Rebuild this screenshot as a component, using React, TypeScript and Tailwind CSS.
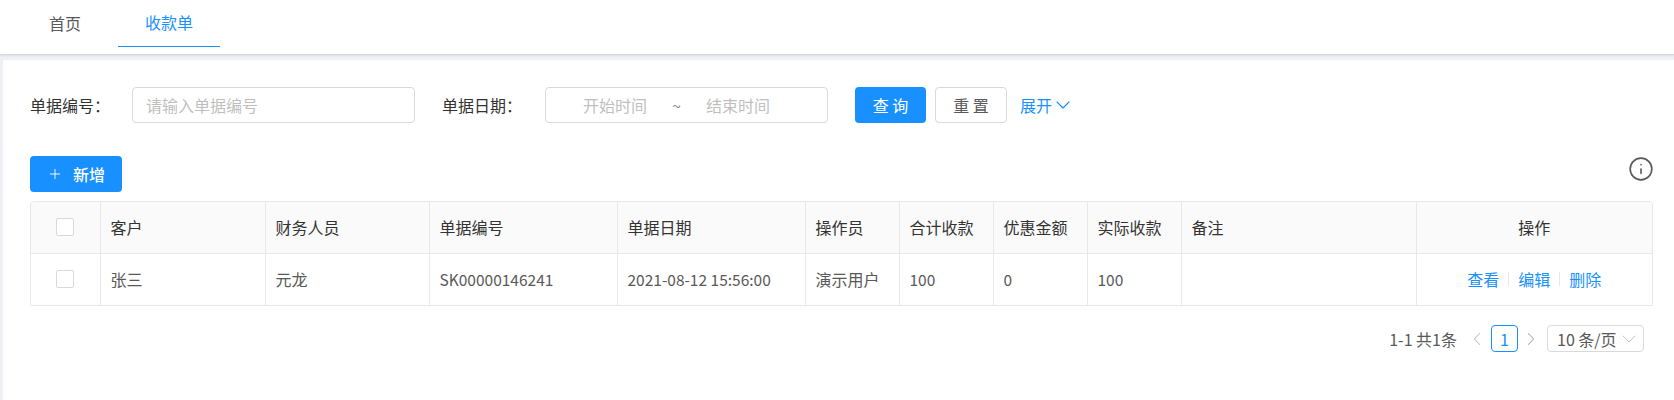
import { ChevronDown, ChevronLeft, ChevronRight, Info, Plus } from "lucide-react";

const font = "font-['Noto_Sans_CJK_SC','Noto_Sans',sans-serif]";

const columns = [
  { title: "客户", value: "张三", width: "w-[165px]", latin: false },
  { title: "财务人员", value: "元龙", width: "w-[164px]", latin: false },
  { title: "单据编号", value: "SK00000146241", width: "w-[188px]", latin: true },
  { title: "单据日期", value: "2021-08-12 15:56:00", width: "w-[188px]", latin: true },
  { title: "操作员", value: "演示用户", width: "w-[94px]", latin: false },
  { title: "合计收款", value: "100", width: "w-[94px]", latin: true },
  { title: "优惠金额", value: "0", width: "w-[94px]", latin: true },
  { title: "实际收款", value: "100", width: "w-[94px]", latin: true },
  { title: "备注", value: "", width: "w-[235px]", latin: false },
];

function Checkbox() {
  return <div className="mx-auto h-[18px] w-[18px] rounded-[2px] border border-[#d9d9d9] bg-white" />;
}

export default function App() {
  return (
    <div className={`${font} min-h-[400px] bg-[#eef0f5] text-[16px] text-[#595959]`}>
      {/* tabs */}
      <div className="flex h-[55px] border-b border-[#d9d9d9] bg-white pl-[30px] shadow-[0_1px_2px_rgba(0,0,0,0.08)]">
        <div className="flex h-[47px] w-[88px] items-center pb-[2px] pl-[19px] text-[#595959]">首页</div>
        <div className="flex h-[47px] w-[102px] items-center justify-center border-b border-[#1890ff] pb-[2px] text-[#1890ff]">收款单</div>
      </div>

      <div className="ml-[3px] mt-[5px] h-[340px] rounded-tl-[2px] bg-white pl-[27px] pr-[21px]">
        {/* search form */}
        <div className="flex h-[36px] translate-y-[27px] items-center">
          <span className="w-[102px] text-[#333]">单据编号：</span>
          <div className="flex h-[36px] w-[283px] items-center rounded-[4px] border border-[#d9d9d9] px-[13px] text-[#bfbfbf]">请输入单据编号</div>
          <span className="ml-[27px] w-[103px] text-[#333]">单据日期：</span>
          <div className="flex h-[36px] w-[283px] items-center rounded-[4px] border border-[#d9d9d9] pl-[37px] text-[#bfbfbf]">
            <span className="w-[64px]">开始时间</span>
            <span className="ml-[25px] w-[9px] text-[#8c8c8c]">~</span>
            <span className="ml-[25px] w-[64px]">结束时间</span>
          </div>
          <button className="ml-[27px] h-[36px] w-[71px] rounded-[4px] bg-[#1890ff] text-white">查 询</button>
          <button className="ml-[9px] h-[36px] w-[72px] rounded-[4px] border border-[#d9d9d9] bg-white">重 置</button>
          <span className="ml-[13px] flex items-center text-[#1890ff]">
            展开
            <ChevronDown size={24} strokeWidth={1.1} className="ml-[-1px]" />
          </span>
        </div>

        {/* toolbar */}
        <div className="mt-[60px] flex h-[36px] items-start justify-between">
          <button className="flex h-[36px] w-[92px] items-center justify-center gap-[10px] rounded-[4px] bg-[#1890ff] font-medium text-white">
            <Plus size={16} strokeWidth={1.4} />
            新增
          </button>
          <Info size={26} strokeWidth={1.5} className="mr-[-1px] text-[#595959]" />
        </div>

        {/* table */}
        <div className="mt-[9px] overflow-hidden rounded-t-[4px] border border-[#e8e8e8]">
          <table className="w-full table-fixed border-collapse">
            <colgroup>
              <col className="w-[69px]" />
              {columns.map((c) => (
                <col key={c.title} className={c.width} />
              ))}
              <col />
            </colgroup>
            <thead>
              <tr className="h-[51px] border-b border-[#e8e8e8] bg-[#fafafa] text-[#333]">
                <th className="border-r border-[#e8e8e8] font-normal">
                  <Checkbox />
                </th>
                {columns.map((c) => (
                  <th key={c.title} className="border-r border-[#e8e8e8] px-[10px] text-left font-normal">
                    {c.title}
                  </th>
                ))}
                <th className="text-center font-normal">操作</th>
              </tr>
            </thead>
            <tbody>
              <tr className="h-[52px]">
                <td className="border-r border-[#e8e8e8]">
                  <Checkbox />
                </td>
                {columns.map((c) => (
                  <td
                    key={c.title}
                    className={c.latin ? "whitespace-nowrap border-r border-[#e8e8e8] px-[10px] text-[15.5px]" : "whitespace-nowrap border-r border-[#e8e8e8] px-[10px]"}
                  >
                    {c.value}
                  </td>
                ))}
                <td>
                  <div className="flex items-center justify-center text-[#1890ff]">
                    <span>查看</span>
                    <span className="mx-[9px] h-[14px] w-px bg-[#e8e8e8]" />
                    <span>编辑</span>
                    <span className="mx-[9px] h-[14px] w-px bg-[#e8e8e8]" />
                    <span>删除</span>
                  </div>
                </td>
              </tr>
            </tbody>
          </table>
        </div>

        {/* pagination */}
        <div className="mt-[19px] flex h-[27px] items-center justify-end pr-[9px]">
          <span>1-1 共1条</span>
          <ChevronLeft size={22} strokeWidth={1.1} className="ml-[9px] text-[#bfbfbf]" />
          <div className="ml-[3px] flex h-[27px] w-[27px] items-center justify-center rounded-[4px] border border-[#1890ff] text-[#1890ff]">1</div>
          <ChevronRight size={22} strokeWidth={1.1} className="ml-[2px] text-[#a6a6a6]" />
          <div className="ml-[5px] flex h-[27px] w-[97px] items-center justify-between rounded-[4px] border border-[#d9d9d9] pl-[9px] pr-[2px]">
            10 条/页
            <ChevronDown size={24} strokeWidth={0.9} className="text-[#bfbfbf]" />
          </div>
        </div>
      </div>
    </div>
  );
}
